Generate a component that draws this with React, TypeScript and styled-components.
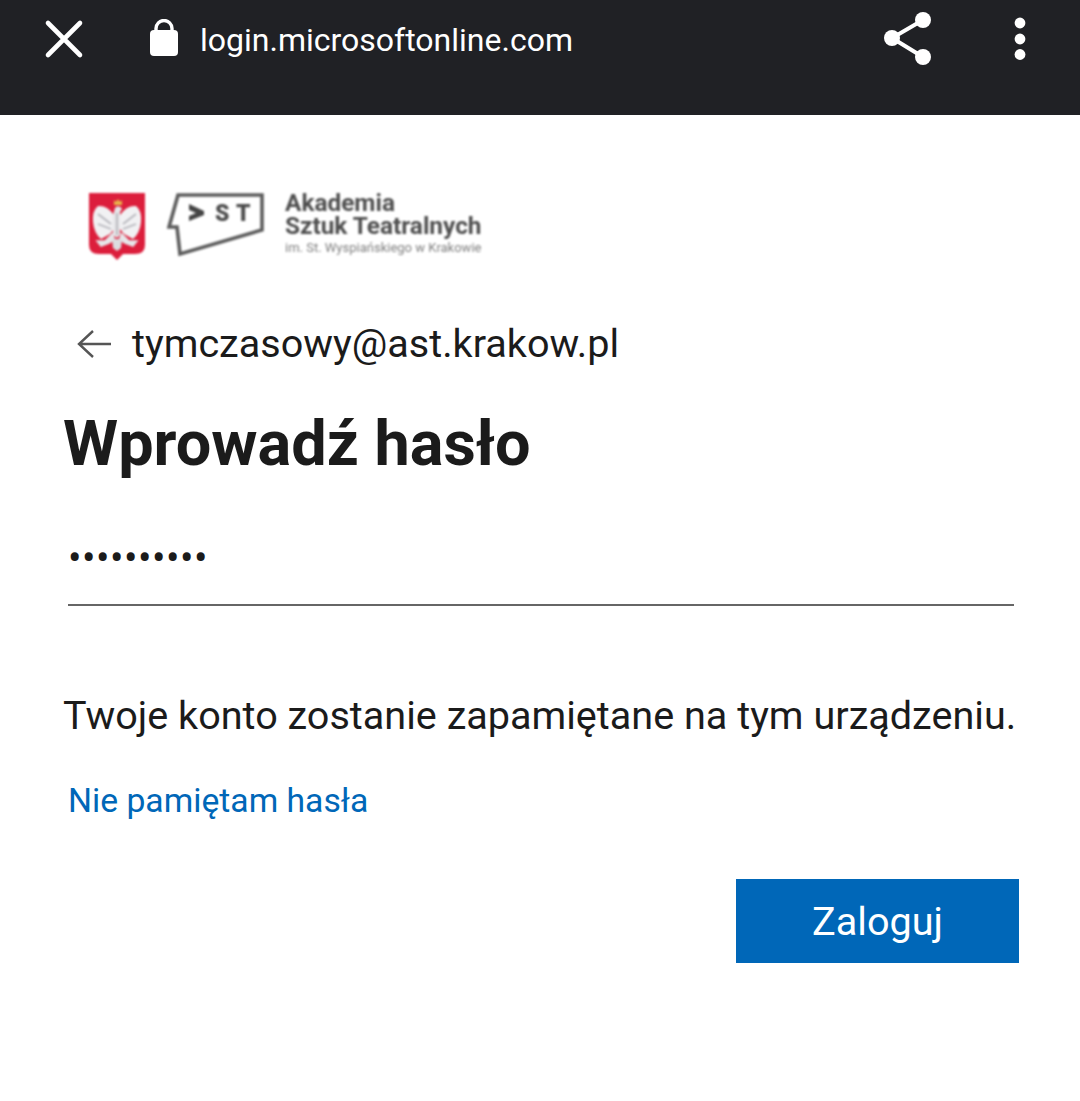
import React from 'react'
import styled, { createGlobalStyle } from 'styled-components'

const GlobalStyle = createGlobalStyle`
    html, body {
        margin: 0;
        padding: 0;
        background: #fff;
        font-family: Roboto, "Liberation Sans", sans-serif;
    }
`

const Page = styled.div`
    width: 1080px;
    height: 1101px;
    overflow: hidden;
    background: #fff;
    display: flex;
    flex-direction: column;
`

const TopBar = styled.header`
    height: 115px;
    flex: none;
    box-sizing: border-box;
    background: #202125;
    color: #fff;
    display: flex;
    align-items: flex-start;
    padding: 12px 0 0 44px;
`

const CloseIcon = styled.svg`
    width: 40px;
    height: 40px;
    margin-top: 7px;
    flex: none;
`

const LockIcon = styled.svg`
    width: 30px;
    height: 38px;
    margin: 7px 0 0 65px;
    flex: none;
`

const Url = styled.div`
    font-size: 32px;
    line-height: 56px;
    margin-left: 21px;
    flex: 1;
`

const ShareIcon = styled.svg`
    width: 50px;
    height: 54px;
    flex: none;
    margin-right: 81px;
`

const MoreIcon = styled.svg`
    width: 14px;
    height: 44px;
    margin: 5px 53px 0 0;
    flex: none;
`

const Content = styled.main`
    display: flex;
    flex-direction: column;
    padding: 75px 0 0 64px;
`

const LogoRow = styled.div`
    display: flex;
    align-items: center;
    height: 72px;
    margin-left: 23px;
    filter: blur(0.8px);
`

const Crest = styled.svg`
    width: 60px;
    height: 70px;
    flex: none;
`

const AstMark = styled.svg`
    width: 98px;
    height: 66px;
    margin-left: 20px;
    flex: none;
`

const LogoText = styled.div`
    margin: -6px 0 0 20px;
    color: #4f4f4f;
    display: flex;
    flex-direction: column;
`

const LogoTitle = styled.div`
    font-size: 24.4px;
    line-height: 23px;
    font-weight: 700;
    white-space: nowrap;
`

const LogoSub = styled.div`
    font-size: 13px;
    line-height: 14px;
    margin-top: 4px;
    color: #808080;
    white-space: nowrap;
`

const IdentityRow = styled.div`
    display: flex;
    align-items: center;
    height: 50px;
    margin: 57px 0 0 12px;
`

const BackIcon = styled.svg`
    width: 36px;
    height: 32px;
    flex: none;
`

const Identity = styled.div`
    margin-left: 20px;
    font-size: 39.6px;
    line-height: 50px;
    color: #1b1b1b;
`

const Title = styled.h1`
    margin: 39px 0 0 -1px;
    font-size: 63px;
    line-height: 72px;
    font-weight: 700;
    color: #1b1b1b;
`

const PasswordField = styled.div`
    width: 946px;
    height: 84px;
    box-sizing: border-box;
    margin: 42px 0 0 4px;
    border-bottom: 2px solid #666;
    color: #1b1b1b;
    font-size: 40px;
    line-height: 74px;
    letter-spacing: 0.5px;
`

const Notice = styled.p`
    margin: 85px 0 0 -1px;
    font-size: 39.6px;
    line-height: 50px;
    color: #1b1b1b;
    white-space: nowrap;
`

const ForgotLink = styled.a`
    margin: 38px 0 0 4px;
    font-size: 33.7px;
    line-height: 44px;
    color: #0067b8;
    text-decoration: none;
`

const Actions = styled.div`
    display: flex;
    justify-content: flex-end;
    width: 955px;
    margin-top: 56px;
`

const SubmitButton = styled.button`
    width: 283px;
    height: 84px;
    border: 0;
    padding: 0;
    background: #0067b8;
    color: #fff;
    font-family: inherit;
    font-size: 39.6px;
`

function AstLogo(): JSX.Element {
    return (
        <AstMark viewBox="0 0 98 66">
            <path d="M11 2H95V37L13 61L10 34H2Z" fill="none" stroke="#5c5c5c" strokeWidth="3.6" />
            <path d="M22 11L37 18V22L22 28V23L29 20L22 17Z" fill="#444" />
            <text x="48" y="28" fontSize="23" fontWeight="900" fill="#4c4c4c" fontFamily="Roboto">S</text>
            <text x="69" y="28" fontSize="23" fontWeight="900" fill="#4c4c4c" fontFamily="Roboto">T</text>
        </AstMark>
    )
}

function PolishCrest(): JSX.Element {
    return (
        <Crest viewBox="0 0 60 70">
            <path d="M2 2H58V54Q58 63 48 63H36L30 69L24 63H12Q2 63 2 54Z" fill="#dc1e3c" />
            <path d="M27 9L29 11L31 8L33 11L35 9V14H27Z" fill="#e8b64a" />
            <path d="M27 24Q20 14 11 15Q5 20 6 31Q7 42 14 48L23 43L27 38Z" fill="#f1f1f3" />
            <path d="M33 24Q40 14 49 15Q55 20 54 31Q53 42 46 48L37 43L33 38Z" fill="#f1f1f3" />
            <path d="M28 17a4 4 0 0 1 7 1l-2 3V44L30 47L26 44V24Z" fill="#e6e6e9" />
            <path d="M26 42L18 50H10L14 55L22 52L28 48M34 42L42 50H50L46 55L38 52L32 48" fill="#e6e6e9" stroke="#e6e6e9" strokeWidth="1.5" />
            <path d="M25 48H35L34 57L30 60L26 57Z" fill="#dcdce0" />
            <path d="M11 23L24 33M49 23L36 33M11 33L24 38M49 33L36 38" stroke="#b4b4ba" strokeWidth="1.6" />
            <path d="M30 22V44" stroke="#a8a8ae" strokeWidth="1.4" />
        </Crest>
    )
}

export default function App(): JSX.Element {
    return (
        <Page>
            <GlobalStyle />
            <TopBar>
                <CloseIcon viewBox="0 0 40 40">
                    <path d="M4 4L36 36M36 4L4 36" stroke="#fff" strokeWidth="4.6" strokeLinecap="round" />
                </CloseIcon>
                <LockIcon viewBox="0 0 30 38">
                    <path d="M7 13V9.5a8 8 0 0 1 16 0V13" fill="none" stroke="#fff" strokeWidth="3.4" />
                    <rect x="1" y="11" width="28" height="26" rx="4" fill="#fff" />
                </LockIcon>
                <Url>login.microsoftonline.com</Url>
                <ShareIcon viewBox="0 0 50 54">
                    <path d="M41 8L10 26L41 45" fill="none" stroke="#fff" strokeWidth="4" />
                    <circle cx="41" cy="8" r="8" fill="#fff" />
                    <circle cx="10" cy="26" r="8" fill="#fff" />
                    <circle cx="41" cy="45" r="8" fill="#fff" />
                </ShareIcon>
                <MoreIcon viewBox="0 0 14 44">
                    <circle cx="7" cy="6" r="5.4" fill="#fff" />
                    <circle cx="7" cy="22" r="5.4" fill="#fff" />
                    <circle cx="7" cy="37.5" r="5.4" fill="#fff" />
                </MoreIcon>
            </TopBar>
            <Content>
                <LogoRow>
                    <PolishCrest />
                    <AstLogo />
                    <LogoText>
                        <LogoTitle>
                            Akademia
                            <br />
                            Sztuk Teatralnych
                        </LogoTitle>
                        <LogoSub>im. St. Wyspiańskiego w Krakowie</LogoSub>
                    </LogoText>
                </LogoRow>
                <IdentityRow>
                    <BackIcon viewBox="0 0 36 32">
                        <path d="M17 3L3 16L17 29M3 16H35" fill="none" stroke="#555" strokeWidth="2.4" />
                    </BackIcon>
                    <Identity>tymczasowy@ast.krakow.pl</Identity>
                </IdentityRow>
                <Title>Wprowadź hasło</Title>
                <PasswordField>••••••••••</PasswordField>
                <Notice>Twoje konto zostanie zapamiętane na tym urządzeniu.</Notice>
                <ForgotLink href="#">Nie pamiętam hasła</ForgotLink>
                <Actions>
                    <SubmitButton>Zaloguj</SubmitButton>
                </Actions>
            </Content>
        </Page>
    )
}
